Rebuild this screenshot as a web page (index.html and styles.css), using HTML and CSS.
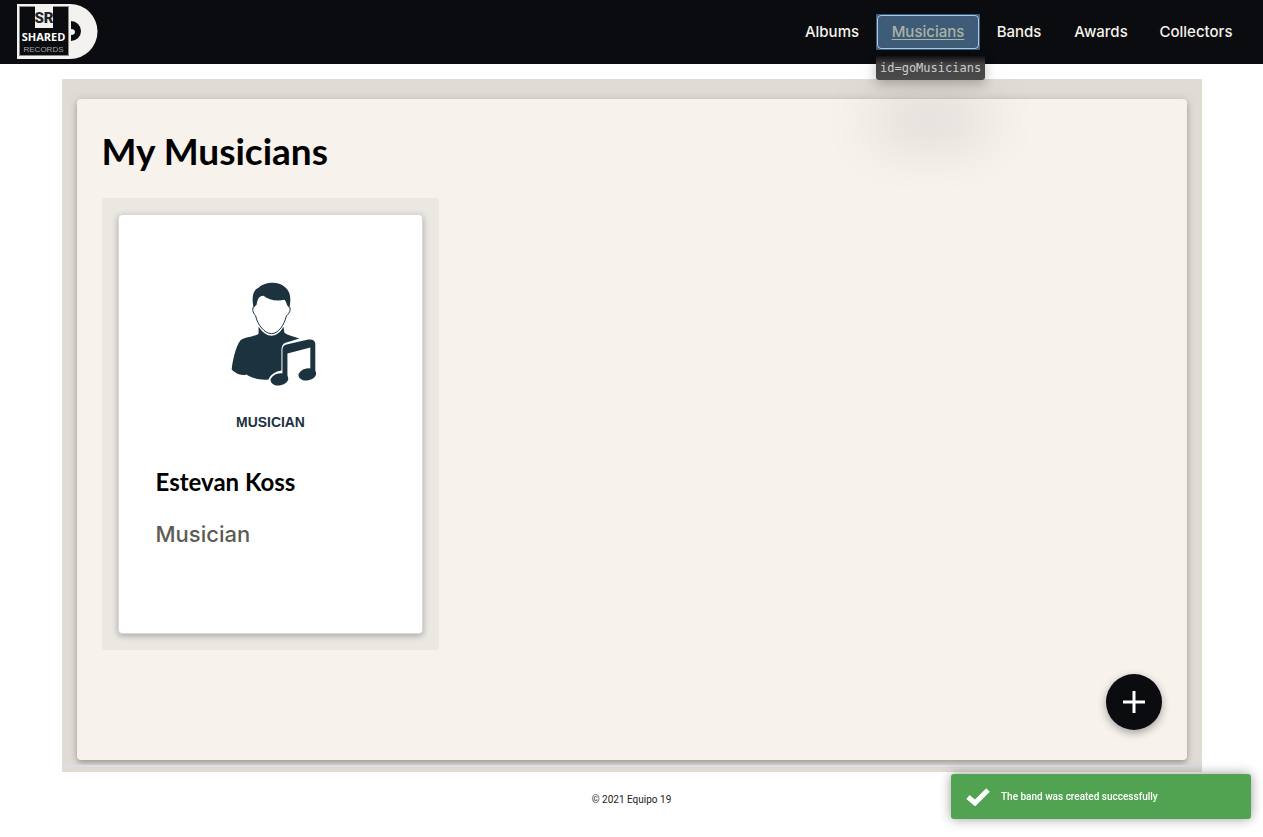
FILE: index.html
```html
<!DOCTYPE html>
<html lang="en">
<head>
<meta charset="utf-8">
<title>Shared Records</title>
<link rel="stylesheet" href="styles.css">
</head>
<body>
<header class="topbar">
  <a class="logo" href="#" aria-label="Shared Records">
    <svg viewBox="0 0 84 56" width="84" height="56">
      <path d="M1 0H54A27.500 27.500 0 0 1 54 55H1Z" fill="#f4f2ee"/>
      <rect x="3" y="2" width="50" height="50" fill="#8c8c8c"/>
      <rect x="4" y="3" width="48" height="48" fill="#0b0c10"/>
      <rect x="19" y="2" width="18" height="22" fill="#f4f2ee"/>
      <path d="M55 17a10 10 0 0 1 0 20v-6a4 3 0 0 0 0-6z" fill="#0b0c10"/>
      <text class="logo-mark" x="28" y="19" text-anchor="middle">SR</text>
      <text class="logo-name" x="27.500" y="37" text-anchor="middle">SHARED</text>
      <text class="logo-sub" x="27.500" y="48" text-anchor="middle">RECORDS</text>
    </svg>
  </a>
  <nav class="nav">
    <a href="#">Albums</a>
    <a class="current" href="#" id="goMusicians">Musicians<span class="tip">id=goMusicians</span></a>
    <a href="#">Bands</a>
    <a href="#">Awards</a>
    <a href="#">Collectors</a>
  </nav>
</header>
<main class="frame">
  <section class="panel">
    <h1>My Musicians</h1>
    <div class="list">
      <div class="cell">
        <article class="card">
          <svg class="portrait" viewBox="-55 -8 230 190" role="img" aria-label="Musician">
            <path d="M43 48C41 37 42 31 48 28C54 22 68 21 74 27C80 31 81 39 79 48L77 46C76 44 76 42 74 40C66 42 58 40 53 36C48 36 47 40 46 45Z" fill="#1c323f"/>
            <path d="M44 46C41 48 42 53 45 56C47 65 54 74 61 74C68 74 74 65 76 56C80 53 81 48 78 46" fill="none" stroke="#1c323f"/>
            <path d="M48 67C52 73 57 76 61 76C65 76 70 73 73 67L74 73C78 76 84 77 89 79L76 83C72 84 71 87 71 92V111C65 112 60 115 58 120C49 121 40 118 36 115C30 117 24 113 21 110C22 101 25 88 29 82C32 77 43 78 48 74Z" fill="#1c323f"/>
            <path d="M72 120V90Q72 86 76 85L98 80Q104 79 105 84V114H100V88L77 94V120Z" fill="#1c323f"/>
            <ellipse cx="69" cy="120" rx="9" ry="6" transform="rotate(-10 69 120)" fill="#1c323f"/>
            <ellipse cx="97" cy="115" rx="9" ry="6" transform="rotate(-10 97 115)" fill="#1c323f"/>
            <text class="portrait-label" x="60" y="168" text-anchor="middle">MUSICIAN</text>
          </svg>
          <h2>Estevan Koss</h2>
          <p>Musician</p>
        </article>
      </div>
    </div>
    <button class="add" type="button" aria-label="Add musician">
      <svg viewBox="0 0 24 24" width="24" height="24"><path d="M12 1v22M1 12h22" stroke="#fff" stroke-width="3"/></svg>
    </button>
  </section>
  <hr class="rule">
</main>
<footer class="footer">© 2021 Equipo 19</footer>
<div class="toast" role="status">
  <svg viewBox="0 0 24 18" width="24" height="18"><path d="M2 9l7 6L22 2" fill="none" stroke="#fff" stroke-width="5"/></svg>
  <span>The band was created successfully</span>
</div>
</body>
</html>
```
FILE: styles.css
```css
* { box-sizing: border-box; }
body { margin: 0; background: #fff; font-family: Roboto, "Liberation Sans", sans-serif; }

.topbar { display: flex; justify-content: space-between; align-items: center; height: 64px; padding: 0 15px 0 16px; background: #0b0c10; }
.logo { display: flex; padding-bottom: 1px; }
.logo-mark { font: 900 15px Roboto, sans-serif; fill: #22242a; }
.logo-name { font: 700 11px "Open Sans", sans-serif; fill: #fff; }
.logo-sub { font: 400 8px "Liberation Sans", sans-serif; fill: #a5a5a5; }
.nav { display: grid; grid-template-columns: 88px 104px 78px 86px 104px; height: 36px; }
.nav a { position: relative; display: flex; align-items: center; justify-content: center; padding-bottom: 2px; color: #f7f2ec; font: 500 15px Inter, sans-serif; text-decoration: none; }
.nav .current { background: #3e5c78; color: #a9b3a4; text-decoration: underline; text-underline-offset: 2px; }
.current::before { content: ""; position: absolute; inset: 1px; border: 1px solid #a5caf0; border-radius: 4px; }
.tip { position: absolute; left: 0; top: 42px; z-index: 2; height: 24px; padding: 0 4px; border-radius: 0 0 3px 3px; background: linear-gradient(#101114, #444 35%, #4a4a4a); color: #ccc; font: 12px/24px "DejaVu Sans Mono", monospace; white-space: nowrap; box-shadow: 0 4px 12px rgba(0, 0, 0, .25), 0 52px 60px rgba(0, 0, 0, .2); }

.frame { max-width: 1140px; margin: 15px auto 0; padding: 20px 15px 4px; background: #e0dcd5; }
.panel { display: flex; flex-direction: column; min-height: 661px; padding: 24px 25px 30px; border-radius: 4px; background: #f7f2ec; box-shadow: 0 3px 5px rgba(0, 0, 0, .2), 0 1px 10px rgba(0, 0, 0, .15); }
h1 { margin: 0; color: #000; font: 700 37px/56px Lato, sans-serif; }
.list { display: grid; grid-template-columns: repeat(auto-fill, minmax(330px, 337px)); margin-top: 19px; }
.cell { padding: 16px; border-radius: 3px; background: #ebe8e3; }
.card { min-height: 420px; padding: 37px; border: 1px solid #d9d9d9; border-radius: 4px; background: #fff; box-shadow: 0 2px 6px rgba(0, 0, 0, .28); }
.portrait { display: block; width: 100%; }
.portrait-label { font: 700 14px "Liberation Sans", sans-serif; fill: #1c323f; }
h2 { margin: 25px 0 0; color: #000; font: 700 24px/32px Lato, sans-serif; }
.card p { margin: 20px 0 0; color: #5e5b55; font: 500 22px/32px Inter, sans-serif; }
.add { display: flex; align-items: center; justify-content: center; align-self: flex-end; width: 56px; height: 56px; margin-top: auto; padding: 0; border: 0; border-radius: 50%; background: #0b0c10; box-shadow: 0 3px 8px rgba(0, 0, 0, .35); }
.rule { position: relative; height: 2px; margin: 5px -10px 1px; border: 0; background: #d9dee8; }

.footer { padding: 20px 0; color: #222; font-size: 10px; line-height: 16px; text-align: center; }
.toast { position: fixed; right: 12px; bottom: 18px; display: flex; align-items: center; gap: 11px; width: 300px; height: 45px; padding: 0 15px; border-radius: 3px; background: #51a351; color: #fff; font-size: 10px; font-weight: 500; box-shadow: 0 0 12px rgba(0, 0, 0, .4); }
```
